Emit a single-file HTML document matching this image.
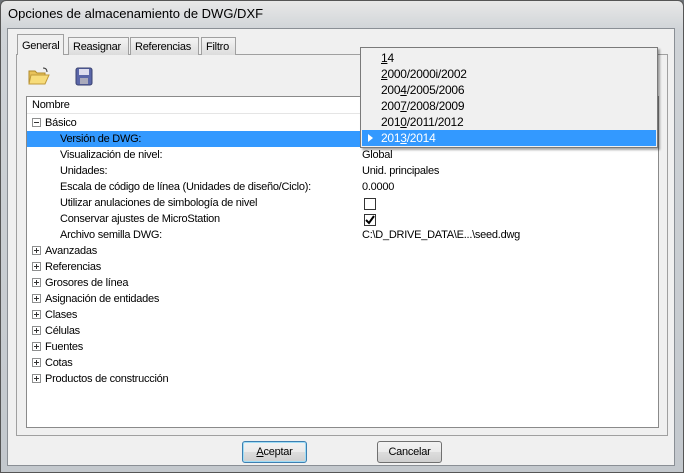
<!DOCTYPE html>
<html><head><meta charset="utf-8"><style>
*{margin:0;padding:0;box-sizing:border-box}
body{width:684px;height:473px;overflow:hidden;background:#6f7378;font-family:"Liberation Sans",sans-serif;font-size:11px;letter-spacing:-0.25px;color:#000;position:relative}
.a{position:absolute}
.win{left:0;top:0;width:684px;height:473px;background:linear-gradient(#e8e8e8,#cfd3d7 30px,#c3c8cd);border:1px solid #555;border-radius:6px 6px 0 0}
.title{left:8px;top:6px;font-size:13px;letter-spacing:0;color:#000}
.client{left:7px;top:28px;width:668px;height:438px;background:#f0f0f0;border:1px solid #8a8f95}
.panel{left:16px;top:54px;width:652px;height:382px;border:1px solid #a0a0a0;background:#f0f0f0}
.tab{top:37px;height:18px;border:1px solid #a0a0a0;border-bottom:none;background:linear-gradient(#f4f4f4,#dcdcdc);padding:3px 4px 0;font-size:11px}
.list{left:26px;top:96px;width:633px;height:332px;border:1px solid #8a8a8a;background:#fff}
.row{position:absolute;left:0;height:16px;line-height:16px;white-space:nowrap}
.box{position:absolute;width:9px;height:9px;border:1px solid #8e8f8f;background:#fff;top:3px}
.box:before{content:"";position:absolute;left:1px;top:3px;width:5px;height:1px;background:#333}
.plus:after{content:"";position:absolute;left:3px;top:1px;width:1px;height:5px;background:#333}
.dd{left:360px;top:47px;width:298px;height:101px;background:#f0f0f0;border:1px solid #7a7a7a;box-shadow:2px 2px 2px rgba(0,0,0,.35)}
.dd div{position:absolute;left:20px;height:16px;line-height:16px;font-size:12px}
.btn{top:441px;width:65px;height:22px;border:1px solid #707070;border-radius:3px;background:linear-gradient(#f2f2f2,#ebebeb 50%,#dddddd 51%,#cfcfcf);text-align:center;line-height:20px;font-size:11px}
u{text-decoration:underline}
</style></head><body>
<div class="a win"></div>
<div class="a title">Opciones de almacenamiento de DWG/DXF</div>
<div class="a client"></div>
<div class="a panel"></div>
<div class="a tab" style="left:17px;top:34px;height:21px;background:#f0f0f0;z-index:2;padding-top:5px">General</div>
<div class="a tab" style="left:68px;width:61px">Reasignar</div>
<div class="a tab" style="left:130px;width:69px">Referencias</div>
<div class="a tab" style="left:201px;width:35px">Filtro</div>
<svg class="a" style="left:28px;top:66px" width="22" height="20" viewBox="0 0 22 20"><path d="M1 5h6l2 2h8v10H1z" fill="#e8c25a" stroke="#b08a2a"/><path d="M3 9h18l-4 9H1z" fill="#f7dc7a" stroke="#c09a3a"/><path d="M15 2c3 0 4 2 4 4" stroke="#333" fill="none"/></svg>
<svg class="a" style="left:75px;top:67px" width="18" height="19" viewBox="0 0 18 19"><rect x="1" y="1" width="16" height="17" rx="2" fill="#5a66a8" stroke="#3a4270"/><rect x="4" y="2" width="10" height="6" fill="#dde"/><rect x="5" y="11" width="8" height="6" fill="#aab"/></svg>
<div class="a list">
 <div class="row" style="top:0;width:631px;height:17px;border-bottom:1px solid #e5e5e5;padding-left:5px;background:#fff">Nombre</div>
 <div class="row" style="top:18px"><span class="box" style="left:5px"></span><span style="position:absolute;left:18px">Básico</span></div>
 <div class="row" style="top:34px;left:0;width:631px;background:#3399ff;color:#000"><span style="position:absolute;left:33px">Versión de DWG:</span></div>
 <div class="row" style="top:50px;left:33px">Visualización de nivel:</div>
 <div class="row" style="top:66px;left:33px">Unidades:</div>
 <div class="row" style="top:82px;left:33px">Escala de código de línea (Unidades de diseño/Ciclo):</div>
 <div class="row" style="top:98px;left:33px">Utilizar anulaciones de simbología de nivel</div>
 <div class="row" style="top:114px;left:33px">Conservar ajustes de MicroStation</div>
 <div class="row" style="top:130px;left:33px">Archivo semilla DWG:</div>
 <div class="row" style="top:50px;left:335px">Global</div>
 <div class="row" style="top:66px;left:335px">Unid. principales</div>
 <div class="row" style="top:82px;left:335px">0.0000</div>
 <div class="a" style="top:101px;left:337px;width:12px;height:12px;border:1px solid #333;background:#fff"></div>
 <div class="a" style="top:117px;left:337px;width:12px;height:12px;border:1px solid #333;background:#fff"><svg width="10" height="10" style="position:absolute;left:0;top:0"><path d="M1 5l3 3 5-7" stroke="#000" stroke-width="2" fill="none"/></svg></div>
 <div class="row" style="top:130px;left:335px">C:\D_DRIVE_DATA\E...\seed.dwg</div>
 <div class="row" style="top:146px"><span class="box plus" style="left:5px"></span><span style="position:absolute;left:18px">Avanzadas</span></div>
 <div class="row" style="top:162px"><span class="box plus" style="left:5px"></span><span style="position:absolute;left:18px">Referencias</span></div>
 <div class="row" style="top:178px"><span class="box plus" style="left:5px"></span><span style="position:absolute;left:18px">Grosores de línea</span></div>
 <div class="row" style="top:194px"><span class="box plus" style="left:5px"></span><span style="position:absolute;left:18px">Asignación de entidades</span></div>
 <div class="row" style="top:210px"><span class="box plus" style="left:5px"></span><span style="position:absolute;left:18px">Clases</span></div>
 <div class="row" style="top:226px"><span class="box plus" style="left:5px"></span><span style="position:absolute;left:18px">Células</span></div>
 <div class="row" style="top:242px"><span class="box plus" style="left:5px"></span><span style="position:absolute;left:18px">Fuentes</span></div>
 <div class="row" style="top:258px"><span class="box plus" style="left:5px"></span><span style="position:absolute;left:18px">Cotas</span></div>
 <div class="row" style="top:274px"><span class="box plus" style="left:5px"></span><span style="position:absolute;left:18px">Productos de construcción</span></div>
</div>
<div class="a dd">
 <div style="top:2px"><u>1</u>4</div>
 <div style="top:18px"><u>2</u>000/2000i/2002</div>
 <div style="top:34px">200<u>4</u>/2005/2006</div>
 <div style="top:50px">200<u>7</u>/2008/2009</div>
 <div style="top:66px">201<u>0</u>/2011/2012</div>
 <div style="top:82px;left:1px;width:294px;background:#3399ff;color:#fff;padding-left:19px"><span style="position:absolute;left:6px;top:4px;width:0;height:0;border-left:5px solid #fff;border-top:4px solid transparent;border-bottom:4px solid transparent"></span>201<u>3</u>/2014</div>
</div>
<div class="a btn" style="left:242px;border-color:#3c7fb1;box-shadow:inset 0 0 0 1px #9fdcf5"><u>A</u>ceptar</div>
<div class="a btn" style="left:377px">Cancelar</div>
</body></html>
